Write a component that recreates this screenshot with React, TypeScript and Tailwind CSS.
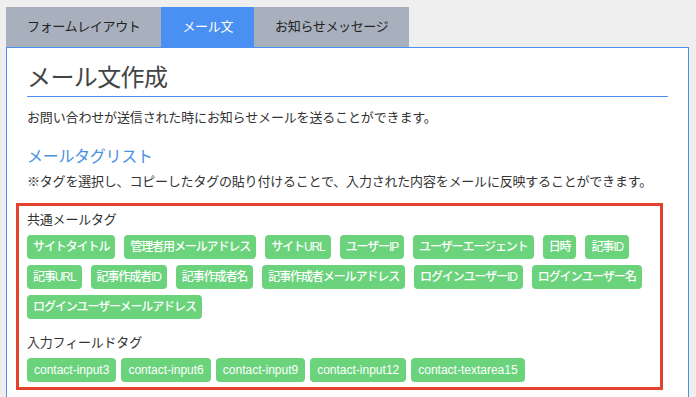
import React from 'react';

const commonTags = [
  'サイトタイトル',
  '管理者用メールアドレス',
  'サイトURL',
  'ユーザーIP',
  'ユーザーエージェント',
  '日時',
  '記事ID',
  '記事URL',
  '記事作成者ID',
  '記事作成者名',
  '記事作成者メールアドレス',
  'ログインユーザーID',
  'ログインユーザー名',
  'ログインユーザーメールアドレス',
];

const inputTags = ['contact-input3', 'contact-input6', 'contact-input9', 'contact-input12', 'contact-textarea15'];

const tabs = [
  { label: 'フォームレイアウト', active: false },
  { label: 'メール文', active: true },
  { label: 'お知らせメッセージ', active: false },
];

export default function App() {
  return (
    <div
      className="min-h-screen bg-[#efefef] pt-[7px] pl-[6px]"
      style={{ fontFamily: '"Liberation Sans", "Noto Sans CJK JP", sans-serif' }}
    >
      <div className="w-[683px]">
        {/* tabs */}
        <div className="flex h-10">
          {tabs.map((tab) => (
            <div
              key={tab.label}
              className={
                tab.active
                  ? 'flex items-center px-[21px] bg-[#4a90f2] text-white text-[13px] tracking-[-0.35px]'
                  : 'flex items-center px-[21px] bg-[#a7b0bc] text-[#222] text-[13px] tracking-[-0.35px]'
              }
            >
              {tab.label}
            </div>
          ))}
        </div>

        <div className="border border-[#4a90f2] bg-white px-5 pt-3 pb-6">
          <h1 className="text-[24px] leading-[36px] text-[#444] border-b border-[#4a90f2] tracking-[-0.6px]">
            メール文作成
          </h1>
          <p className="mt-[11px] text-[13px] leading-5 text-[#333] tracking-[-0.15px]">
            お問い合わせが送信された時にお知らせメールを送ることができます。
          </p>

          <h2 className="mt-[17px] text-[16px] leading-6 text-[#4a90e2] tracking-[-0.3px]">メールタグリスト</h2>
          <p className="mt-[3px] text-[13px] leading-5 text-[#333] tracking-[-0.2px]">
            ※タグを選択し、コピーしたタグの貼り付けることで、入力された内容をメールに反映することができます。
          </p>

          <div className="mt-[11px] -ml-[11px] w-[647px] border-[3px] border-[#e2432a] px-2 pt-[4px] pb-[5px]">
            <div className="text-[13px] leading-5 text-[#333] tracking-[-0.2px]">共通メールタグ</div>
            <div className="mt-[5px] flex flex-wrap gap-x-[9px] gap-y-[6px]">
              {commonTags.map((tag) => (
                <span
                  key={tag}
                  className="h-6 flex items-center px-[6px] rounded bg-[#6ad37c] text-white text-[12px] font-medium tracking-[-1.1px]"
                >
                  {tag}
                </span>
              ))}
            </div>

            <div className="mt-[14px] text-[13px] leading-5 text-[#333] tracking-[-0.2px]">入力フィールドタグ</div>
            <div className="mt-[5px] flex flex-wrap gap-x-[5px] gap-y-[6px]">
              {inputTags.map((tag) => (
                <span
                  key={tag}
                  className="h-6 flex items-center px-[7px] rounded bg-[#6ad37c] text-white text-[12px] font-medium"
                >
                  {tag}
                </span>
              ))}
            </div>
          </div>
        </div>
      </div>
    </div>
  );
}
